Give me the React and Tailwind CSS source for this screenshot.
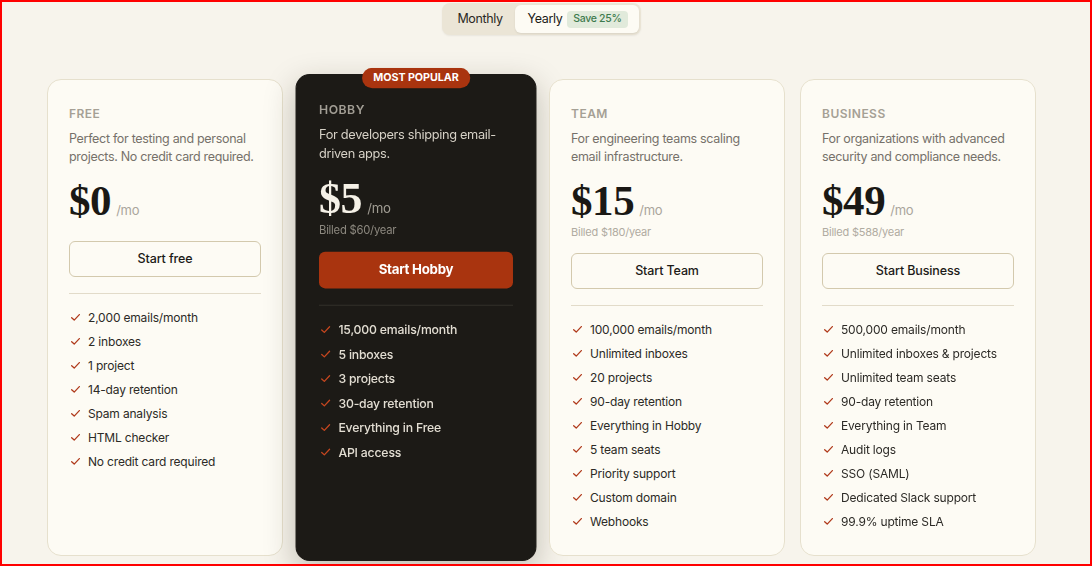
import React from "react";

const plans = [
  {
    name: "FREE",
    desc: "Perfect for testing and personal projects. No credit card required.",
    price: "$0",
    billed: null,
    cta: "Start free",
    features: [
      "2,000 emails/month",
      "2 inboxes",
      "1 project",
      "14-day retention",
      "Spam analysis",
      "HTML checker",
      "No credit card required",
    ],
  },
  {
    name: "HOBBY",
    desc: "For developers shipping email-driven apps.",
    price: "$5",
    billed: "Billed $60/year",
    cta: "Start Hobby",
    popular: true,
    features: [
      "15,000 emails/month",
      "5 inboxes",
      "3 projects",
      "30-day retention",
      "Everything in Free",
      "API access",
    ],
  },
  {
    name: "TEAM",
    desc: "For engineering teams scaling email infrastructure.",
    price: "$15",
    billed: "Billed $180/year",
    cta: "Start Team",
    features: [
      "100,000 emails/month",
      "Unlimited inboxes",
      "20 projects",
      "90-day retention",
      "Everything in Hobby",
      "5 team seats",
      "Priority support",
      "Custom domain",
      "Webhooks",
    ],
  },
  {
    name: "BUSINESS",
    desc: "For organizations with advanced security and compliance needs.",
    price: "$49",
    billed: "Billed $588/year",
    cta: "Start Business",
    features: [
      "500,000 emails/month",
      "Unlimited inboxes & projects",
      "Unlimited team seats",
      "90-day retention",
      "Everything in Team",
      "Audit logs",
      "SSO (SAML)",
      "Dedicated Slack support",
      "99.9% uptime SLA",
    ],
  },
];

function CheckIcon({ dark }) {
  return (
    <svg
      width="11"
      height="11"
      viewBox="0 0 12 12"
      fill="none"
      className={dark ? "text-[#c4461f] shrink-0" : "text-[#b03a1b] shrink-0"}
    >
      <path
        d="M1.8 6.2 L4.6 8.8 L10.2 2.8"
        stroke="currentColor"
        strokeWidth="1.4"
        strokeLinecap="round"
        strokeLinejoin="round"
      />
    </svg>
  );
}

function Card({ plan }) {
  const dark = !!plan.popular;
  return (
    <div
      className={
        dark
          ? "relative w-[236px] shrink-0 rounded-[14px] border border-[#1c1a16] bg-[#1c1a16] px-[22px] pt-[26px] pb-[25px] scale-[1.021] shadow-[0_10px_30px_rgba(40,30,10,0.25)]"
          : "relative w-[236px] shrink-0 rounded-[14px] border border-[#e6e0cd] bg-[#fdfbf4] px-[21px] pt-[26px] pb-[25px]"
      }
    >
      {dark && (
        <div className="absolute left-1/2 top-[-7px] -translate-x-1/2 rounded-full bg-[#a9340f] px-[11px] h-[20px] flex items-center text-[10.5px] font-bold tracking-[-0.005em] text-white leading-none whitespace-nowrap">
          MOST POPULAR
        </div>
      )}
      <div
        className={
          "text-[12px] leading-[16px] font-semibold tracking-[0.04em] " +
          (dark ? "text-[#a29e95]" : "text-[#a5a095]")
        }
      >
        {plan.name}
      </div>
      <p
        className={
          "mt-[8px] text-[12.5px] leading-[18px] tracking-[-0.025em] " +
          (dark ? "text-[#d6d1c6]" : "text-[#76716a]")
        }
      >
        {plan.desc}
      </p>
      <div className="mt-[13px] flex items-baseline h-[44px]">
        <span
          className={
            "font-['Liberation_Serif',serif] font-bold text-[43px] leading-[44px] tracking-[-0.01em] " +
            (dark ? "text-[#f5f1e7]" : "text-[#1a1814]")
          }
        >
          {plan.price}
        </span>
        <span
          className={
            "ml-[5px] text-[13px] tracking-[-0.02em] " +
            (dark ? "text-[#a09c93]" : "text-[#aaa59c]")
          }
        >
          /mo
        </span>
      </div>
      {plan.billed && (
        <div
          className={
            "mt-[3px] mb-[-3px] h-[12px] text-[11px] leading-[12px] tracking-[-0.02em] " +
            (dark ? "text-[#8c887f]" : "text-[#b0aba1]")
          }
        >
          {plan.billed}
        </div>
      )}
      <button
        className={
          dark
            ? "mt-[18px] w-full h-[36px] rounded-[6px] bg-[#a9340f] text-[13px] font-bold tracking-[-0.02em] text-white"
            : "mt-[18px] w-full h-[36px] rounded-[6px] border border-[#d3c9ad] bg-[#fdfbf4] text-[12.5px] font-medium tracking-[-0.01em] text-[#1c1a17]"
        }
      >
        {plan.cta}
      </button>
      <div
        className={
          "mt-[16px] h-px " + (dark ? "bg-[#33302a]" : "bg-[#e2dbc9]")
        }
      />
      <ul className="mt-[16px] flex flex-col gap-[8px]">
        {plan.features.map((f) => (
          <li key={f} className="flex items-center h-[16px]">
            <span className="w-[19px] pl-[1px] flex items-center -mt-[2px]">
              <CheckIcon dark={dark} />
            </span>
            <span
              className={
                "text-[12px] leading-[16px] tracking-[-0.015em] whitespace-nowrap " +
                (dark ? "text-[#e3ded3] font-medium" : "text-[#2c2a26]")
              }
            >
              {f}
            </span>
          </li>
        ))}
      </ul>
    </div>
  );
}

export default function App() {
  return (
    <div className="w-[1092px] h-[566px] overflow-hidden border-2 border-[#ff0000] bg-[#f7f4ec] font-['Inter',sans-serif]">
      <div className="w-[1079px]">
        <div className="flex justify-center pt-px">
          <div className="flex items-center gap-[12px] rounded-[8px] bg-[#ebe5d6] p-[2px] pl-[15px] shadow-[0_1px_2px_rgba(0,0,0,0.06)]">
            <span className="text-[12.5px] tracking-[-0.03em] text-[#2a2824]">Monthly</span>
            <div className="flex items-center gap-[5px] rounded-[6px] bg-[#fdfbf4] h-[28px] pl-[13px] pr-[11px] shadow-[0_1px_2px_rgba(0,0,0,0.08)]">
              <span className="text-[12.5px] tracking-[-0.03em] text-[#1c1a17]">Yearly</span>
              <span className="rounded-[4px] bg-[#e1eadb] px-[6px] h-[17px] flex items-center text-[10.5px] font-medium tracking-[-0.03em] text-[#3e7a4d]">
                Save 25%
              </span>
            </div>
          </div>
        </div>
        <div className="mt-[44px] flex justify-center gap-[15px]">
          {plans.map((p) => (
            <Card key={p.name} plan={p} />
          ))}
        </div>
      </div>
    </div>
  );
}
